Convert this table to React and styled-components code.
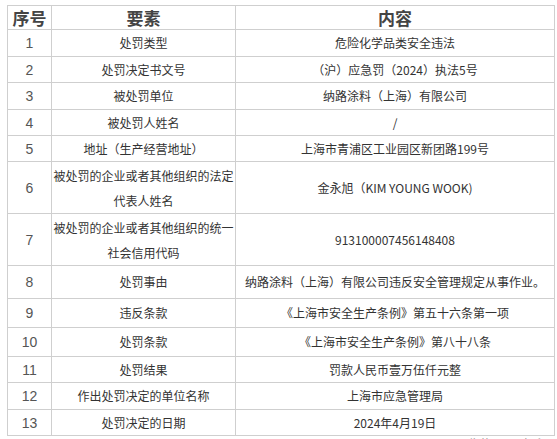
import React from 'react';
import styled, { createGlobalStyle } from 'styled-components';

const GlobalStyle = createGlobalStyle`
  body {
    margin: 0;
    background: #fff;
    font-family: "Noto Sans CJK SC", "Liberation Sans", sans-serif;
    overflow: hidden;
  }
`;

const Page = styled.div`
  padding: 5px 0 0 7px;
  width: 557px;
  height: 439px;
  box-sizing: border-box;
  overflow: hidden;
`;

const Table = styled.table`
  width: 548px;
  border-collapse: collapse;
  table-layout: fixed;
  color: #333;
`;

const Row = styled.tr`
  height: ${props => props.h}px;
`;

const HeadCell = styled.th`
  border: 1px solid #cfcfcf;
  padding: 0;
  font-size: 17px;
  font-weight: 700;
  line-height: 20px;
  color: #444;
  text-align: center;
  vertical-align: middle;
`;

const IndexCell = styled.td`
  border: 1px solid #cfcfcf;
  padding: 0;
  font-family: "Liberation Sans", Arial, sans-serif;
  font-size: 14px;
  line-height: 16px;
  color: #555;
  text-align: center;
  vertical-align: middle;
`;

const TextCell = styled.td`
  border: 1px solid #cfcfcf;
  padding: 0 1px;
  font-size: 12px;
  line-height: ${props => (props.tall ? 25 : 24)}px;
  color: #333;
  text-align: center;
  vertical-align: middle;
  word-break: break-all;
`;

const Footer = styled.div`
  display: flex;
  justify-content: flex-end;
  gap: 18px;
  padding: 1px 10px 0 0;
  font-size: 12px;
  line-height: 14px;
  color: #999;
`;

const FootItem = styled.span`
  display: flex;
  align-items: center;
  gap: 6px;
`;

const Mark = styled.span`
  width: 8px;
  height: 8px;
  background: #888;
  display: inline-block;
`;

const rows = [
  { n: 1, k: '处罚类型', v: '危险化学品类安全违法', h: 27 },
  { n: 2, k: '处罚决定书文号', v: '（沪）应急罚（2024）执法5号', h: 26 },
  { n: 3, k: '被处罚单位', v: '纳路涂料（上海）有限公司', h: 27 },
  { n: 4, k: '被处罚人姓名', v: '/', h: 26 },
  { n: 5, k: '地址（生产经营地址）', v: '上海市青浦区工业园区新团路199号', h: 26 },
  { n: 6, k: '被处罚的企业或者其他组织的法定代表人姓名', v: '金永旭（KIM YOUNG WOOK)', h: 52 },
  { n: 7, k: '被处罚的企业或者其他组织的统一社会信用代码', v: '913100007456148408', h: 52 },
  { n: 8, k: '处罚事由', v: '纳路涂料（上海）有限公司违反安全管理规定从事作业。', h: 33 },
  { n: 9, k: '违反条款', v: '《上海市安全生产条例》第五十六条第一项', h: 29 },
  { n: 10, k: '处罚条款', v: '《上海市安全生产条例》第八十八条', h: 29 },
  { n: 11, k: '处罚结果', v: '罚款人民币壹万伍仟元整', h: 26 },
  { n: 12, k: '作出处罚决定的单位名称', v: '上海市应急管理局', h: 27 },
  { n: 13, k: '处罚决定的日期', v: '2024年4月19日', h: 26 },
];

export default function App() {
  return (
    <Page>
      <GlobalStyle />
      <Table>
        <colgroup>
          <col style={{ width: 44 }} />
          <col style={{ width: 184 }} />
          <col />
        </colgroup>
        <thead>
          <Row h={24}>
            <HeadCell>序号</HeadCell>
            <HeadCell>要素</HeadCell>
            <HeadCell>内容</HeadCell>
          </Row>
        </thead>
        <tbody>
          {rows.map(r => (
            <Row key={r.n} h={r.h}>
              <IndexCell>{r.n}</IndexCell>
              <TextCell tall={r.h > 40}>{r.k}</TextCell>
              <TextCell tall={r.h > 40}>{r.v}</TextCell>
            </Row>
          ))}
        </tbody>
      </Table>
      <Footer>
        <FootItem>
          <Mark />
          收藏
        </FootItem>
        <FootItem>
          <Mark />
          打印
        </FootItem>
      </Footer>
    </Page>
  );
}
